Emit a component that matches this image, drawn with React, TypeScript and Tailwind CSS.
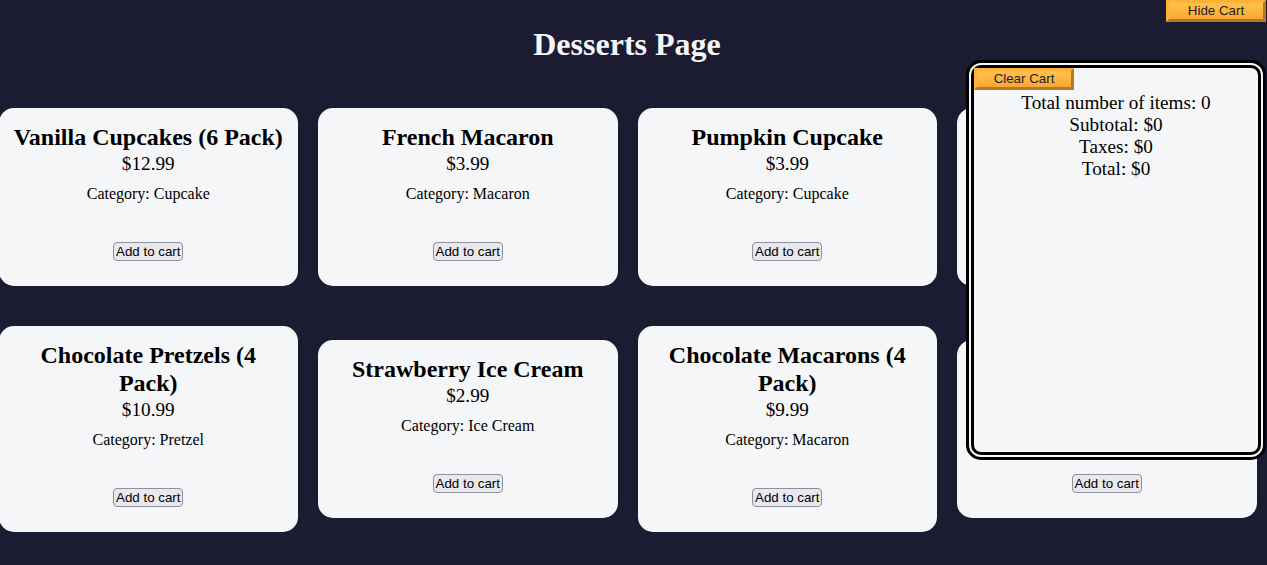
import React from "react";

type Dessert = { name: string; price: string; category: string };

const desserts: Dessert[] = [
  { name: "Vanilla Cupcakes (6 Pack)", price: "$12.99", category: "Cupcake" },
  { name: "French Macaron", price: "$3.99", category: "Macaron" },
  { name: "Pumpkin Cupcake", price: "$3.99", category: "Cupcake" },
  { name: "Chocolate Cupcake", price: "$5.99", category: "Cupcake" },
  { name: "Chocolate Pretzels (4 Pack)", price: "$10.99", category: "Pretzel" },
  { name: "Strawberry Ice Cream", price: "$2.99", category: "Ice Cream" },
  { name: "Chocolate Macarons (4 Pack)", price: "$9.99", category: "Macaron" },
  { name: "Strawberry Pretzel", price: "$4.99", category: "Pretzel" },
];

const goldBtn =
  "block w-[100px] border-[3px] border-solid border-t-[#fdb23a] border-l-[#fdb23a] border-b-[#b27a25] border-r-[#b27a25] bg-gradient-to-b from-[#fec34a] to-[#fba733] text-[#1b1b32] text-[13.33px] leading-[16px] [font-family:'Liberation_Sans',Arial,sans-serif] cursor-pointer";

function Card({ d }: { d: Dessert }) {
  return (
    <div className="bg-[#f5f6f7] rounded-[15px] px-[10px] pt-[15px] pb-[25px] text-center text-black">
      <h2 className="text-[24px] leading-[28px] font-bold">{d.name}</h2>
      <p className="text-[19.2px] leading-[22px] mt-[2px]">{d.price}</p>
      <p className="text-[16px] leading-[18px] mt-[10px]">Category: {d.category}</p>
      <button className="block mx-auto mt-[39px] h-[19px] px-[2px] bg-[#e9e9ed] border border-[#8f8f9d] rounded-[4px] text-[13.33px] leading-[15px] text-black [font-family:'Liberation_Sans',Arial,sans-serif]">
        Add to cart
      </button>
    </div>
  );
}

export default function App() {
  return (
    <div className="relative min-h-[565px] bg-[#1b1b32] overflow-hidden [font-family:'Liberation_Serif','Times_New_Roman',serif]">
      <button className={`${goldBtn} absolute top-0 right-[1px] h-[22px]`}>Hide Cart</button>

      <h1 className="w-[1254px] pt-[26px] text-center text-[32px] leading-[37px] font-bold text-[#f5f6f7]">
        Desserts Page
      </h1>

      <div className="grid grid-cols-[repeat(4,299.5px)] gap-x-[20px] gap-y-[40px] items-center -ml-[1.5px] mt-[45px] pb-[33px]">
        {desserts.map((d) => (
          <Card key={d.name} d={d} />
        ))}
      </div>

      <div className="absolute top-[60px] right-[1px] w-[300px] h-[400px] bg-[#f5f6f7] border-8 border-double border-black rounded-[15px] text-center text-[19.2px] leading-[22px] text-black">
        <button className={`${goldBtn} h-[22px]`}>Clear Cart</button>
        <p className="mt-[2px]">Total number of items: 0</p>
        <p>Subtotal: $0</p>
        <p>Taxes: $0</p>
        <p>Total: $0</p>
      </div>
    </div>
  );
}
